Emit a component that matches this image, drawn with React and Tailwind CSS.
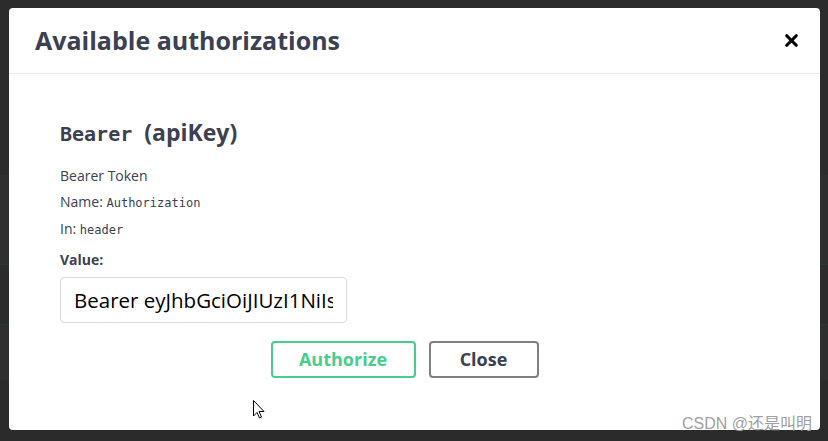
import { X } from 'lucide-react'

const sans = "font-['Open_Sans',sans-serif]"
const mono = "font-['DejaVu_Sans_Mono',monospace]"

export default function App() {
  return (
    <div className="relative h-[441px] w-full overflow-hidden bg-[#2b2b2b]">
      {/* dimmed page behind the modal */}
      <div className="flex h-full flex-col">
        <div className="h-[175px] bg-[#2c2c2c]" />
        <div className="h-[90px] border-b border-[#233d31] bg-[#2f2f2f]" />
        <div className="h-[60px] border-b border-[#233d31] bg-[#2c2c2c]" />
        <div className="h-[55px] bg-[#2f2f2f]" />
        <div className="flex-1 bg-[#2b2b2b]" />
      </div>

      <div
        className={`absolute left-[9px] top-[8px] flex h-[422px] w-[811px] flex-col rounded-[4px] bg-white ${sans}`}
      >
        <div className="flex h-[66px] items-center justify-between border-b border-[#ebebeb] px-[26px]">
          <h3 className="text-[25px] font-bold text-[#3b4151]">Available authorizations</h3>
          <X className="mr-[-7px] h-[19px] w-[19px] text-black" strokeWidth={4} />
        </div>

        <div className="flex flex-col px-[51px] pt-[43px]">
          <h4 className="flex items-baseline text-[23px] font-bold leading-[30px] text-[#3b4151]">
            <code className={`${mono} text-[20px]`}>Bearer</code>
            <span className="ml-[12px]">(apiKey)</span>
          </h4>
          <p className="mt-[16px] text-[14px] leading-[22px] text-[#3b4151]">Bearer Token</p>
          <p className="mt-[4px] text-[14px] leading-[22px] text-[#3b4151]">
            Name: <code className={`${mono} text-[12px]`}>Authorization</code>
          </p>
          <p className="mt-[4px] text-[14px] leading-[22px] text-[#3b4151]">
            In: <code className={`${mono} text-[12px]`}>header</code>
          </p>
          <label className="mt-[8px] text-[14px] font-bold leading-[22px] text-[#3b4151]">Value:</label>
          <input
            readOnly
            value="Bearer eyJhbGciOiJIUzI1NiIsInR5cCI6"
            className={`mt-[6px] h-[46px] w-[287px] rounded-[4px] border border-[#d9d9d9] px-[13px] text-[20.5px] text-black outline-none ${sans}`}
          />
          <div className="mt-[18px] flex justify-center gap-[13px] pr-[20px]">
            <button className="h-[37px] w-[145px] rounded-[4px] border-2 border-[#49cc90] text-[18px] font-bold text-[#49cc90]">
              Authorize
            </button>
            <button className="h-[37px] w-[110px] rounded-[4px] border-2 border-[#808080] text-[18px] font-bold text-[#3b4151]">
              Close
            </button>
          </div>
        </div>

        <div className="relative flex-1">
          <svg className="absolute left-[244px] top-[22px]" width="12" height="19" viewBox="0 0 12 19">
            <path d="M0.5 0.5 L0.5 16 L4 12.5 L6.5 18 L8.5 17 L6 11.5 L11 11.5 Z" fill="white" stroke="black" strokeWidth="1" />
          </svg>
          <span className="absolute bottom-[-6px] right-[8px] font-['Liberation_Sans','Noto_Sans_CJK_SC',sans-serif] text-[16px] text-[#a0a0a0]">
            CSDN @还是叫明
          </span>
        </div>
      </div>
    </div>
  )
}
